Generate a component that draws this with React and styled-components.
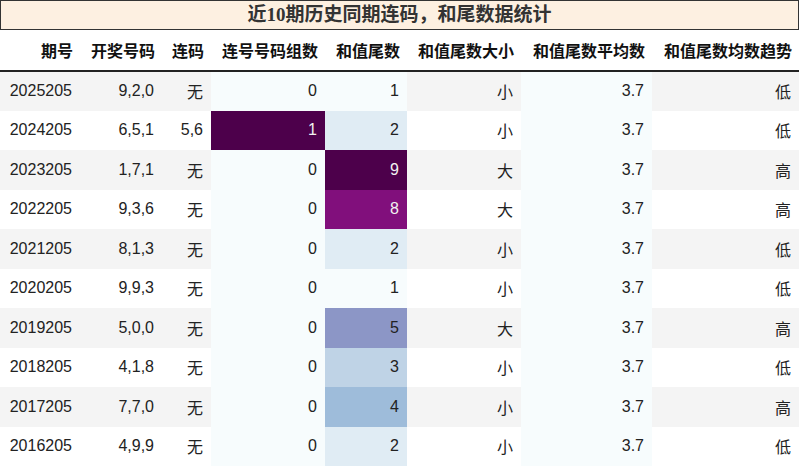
import React from "react";
import styled, { createGlobalStyle } from "styled-components";

const GlobalStyle = createGlobalStyle`
  body {
    margin: 0;
    background: #fff;
    font-family: "Liberation Sans", "Noto Sans CJK SC", sans-serif;
  }
`;

const Wrap = styled.div`
  width: 799px;
`;

const Title = styled.div`
  height: 28px;
  border: 1px solid #333;
  background: #fdf0e1;
  color: #333;
  font-family: "Liberation Serif", "Noto Sans CJK SC", serif;
  font-weight: bold;
  font-size: 19px;
  line-height: 28px;
  text-align: center;
`;

const Table = styled.table`
  width: 799px;
  border-collapse: collapse;
  table-layout: fixed;
  font-size: 16px;
  color: #222;
`;

const HeadCell = styled.th`
  height: 40px;
  padding: 0 7px 0 0;
  text-align: right;
  font-weight: bold;
  color: #111;
  white-space: nowrap;
  border-bottom: 2px solid #222;
`;

const Row = styled.tr`
  height: 39.5px;
  background: ${(p) => (p.$odd ? "#f4f4f4" : "#fff")};
`;

const Cell = styled.td`
  padding: 0 8px 0 0;
  text-align: right;
  white-space: nowrap;
  background: ${(p) => p.$bg || "transparent"};
  color: ${(p) => (p.$light ? "#f1f1f1" : "#222")};
`;

const widths = [80, 82, 49, 114, 82, 114, 131, 147];
const heads = ["期号", "开奖号码", "连码", "连号号码组数", "和值尾数", "和值尾数大小", "和值尾数平均数", "和值尾数均数趋势"];

const rows = [
  ["2025205", "9,2,0", "无", 0, 1, "小", "3.7", "低"],
  ["2024205", "6,5,1", "5,6", 1, 2, "小", "3.7", "低"],
  ["2023205", "1,7,1", "无", 0, 9, "大", "3.7", "高"],
  ["2022205", "9,3,6", "无", 0, 8, "大", "3.7", "高"],
  ["2021205", "8,1,3", "无", 0, 2, "小", "3.7", "低"],
  ["2020205", "9,9,3", "无", 0, 1, "小", "3.7", "低"],
  ["2019205", "5,0,0", "无", 0, 5, "大", "3.7", "高"],
  ["2018205", "4,1,8", "无", 0, 3, "小", "3.7", "低"],
  ["2017205", "7,7,0", "无", 0, 4, "小", "3.7", "高"],
  ["2016205", "4,9,9", "无", 0, 2, "小", "3.7", "低"],
];

// BuPu colour map, 9 stops
const bupu = ["#f7fcfd", "#e0ecf4", "#bfd3e6", "#9ebcda", "#8c96c6", "#8c6bb1", "#88419d", "#810f7c", "#4d004b"];

const hex = (h) => [1, 3, 5].map((i) => parseInt(h.slice(i, i + 2), 16));

const shade = (t) => {
  const x = t * 8;
  const i = Math.min(7, Math.floor(x));
  const f = x - i;
  const a = hex(bupu[i]);
  const b = hex(bupu[i + 1]);
  const c = a.map((v, k) => Math.round(v + (b[k] - v) * f));
  const lum = (0.299 * c[0] + 0.587 * c[1] + 0.114 * c[2]) / 255;
  return { bg: `rgb(${c.join(",")})`, light: lum < 0.5 };
};

const range = (col) => {
  const vals = rows.map((r) => Number(r[col]));
  return [Math.min(...vals), Math.max(...vals)];
};

const gradCols = { 3: range(3), 4: range(4), 6: range(6) };

const App = () => {
  return (
    <Wrap>
      <GlobalStyle />
      <Title>近10期历史同期连码，和尾数据统计</Title>
      <Table>
        <colgroup>
          {widths.map((w, i) => (
            <col key={i} style={{ width: w }} />
          ))}
        </colgroup>
        <thead>
          <tr>
            {heads.map((h) => (
              <HeadCell key={h}>{h}</HeadCell>
            ))}
          </tr>
        </thead>
        <tbody>
          {rows.map((r, i) => (
            <Row key={r[0]} $odd={i % 2 === 0}>
              {r.map((v, j) => {
                const g = gradCols[j];
                if (!g) return <Cell key={j}>{v}</Cell>;
                const t = g[1] === g[0] ? 0 : (Number(v) - g[0]) / (g[1] - g[0]);
                const s = shade(t);
                return (
                  <Cell key={j} $bg={s.bg} $light={s.light}>
                    {v}
                  </Cell>
                );
              })}
            </Row>
          ))}
        </tbody>
      </Table>
    </Wrap>
  );
};

export default App;
